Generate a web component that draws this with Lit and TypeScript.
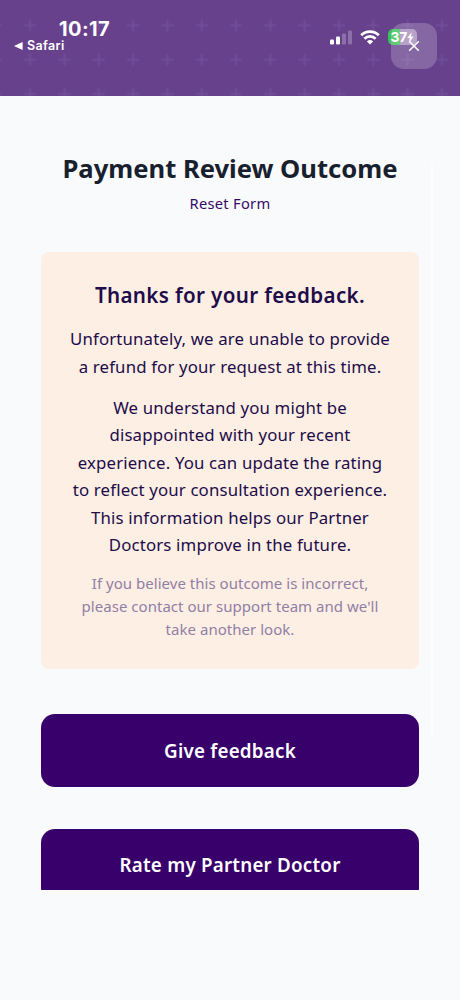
import { LitElement, html, css, svg } from "lit";
import { customElement } from "lit/decorators.js";

@customElement("status-header")
class StatusHeader extends LitElement {
  static styles = css`
    :host { display: block; position: relative; height: 96px; background: #67418c; color: #fff; overflow: hidden; font-family: Inter, "Liberation Sans", sans-serif; }
    .pattern { position: absolute; inset: 0; width: 100%; height: 100%; }
    .bar { position: relative; display: flex; justify-content: space-between; padding: 17px 43px 0 14px; }
    .left { display: flex; flex-direction: column; }
    .time { font-size: 20px; line-height: 24px; font-weight: 700; margin-left: 45px; letter-spacing: 0.4px; white-space: nowrap; }
    .back { display: flex; align-items: center; gap: 4px; font-size: 12.5px; line-height: 10px; font-weight: 600; letter-spacing: 0.35px; }
    .right { display: flex; align-items: center; height: 16px; margin-top: 12px; }
    .signal { width: 22px; height: 15px; margin-right: 8px; }
    .wifi { width: 20px; height: 15px; margin-right: 8px; }
    .battery { box-sizing: border-box; width: 29px; height: 16px; border-radius: 5px; padding-left: 2.5px; display: flex; align-items: center; background: linear-gradient(90deg, #3fbf5c 0 12px, #a48cba 12px); font-size: 13.8px; font-weight: 700; letter-spacing: -0.2px; }
    .bolt { width: 7px; height: 11px; }
    .close { position: absolute; left: 391px; top: 23px; width: 46px; height: 46px; border: 0; padding: 0; border-radius: 13px; background: rgba(255, 255, 255, 0.2); display: grid; place-items: center; }
    .close svg { width: 12px; height: 12px; }
  `;
  render() {
    return html`
      <svg class="pattern">
        <defs>
          <pattern id="plus" x="12.9" y="8.1" width="34.32" height="34.4" patternUnits="userSpaceOnUse">
            <path d="M11.2 17.2h12M17.2 11.2v12" stroke="#704c97" stroke-width="2" />
          </pattern>
        </defs>
        <rect width="100%" height="100%" fill="url(#plus)" />
      </svg>
      <div class="bar">
        <div class="left">
          <div class="time">10:17</div>
          <div class="back">
            <svg width="9" height="8" viewBox="0 0 9 8"><path d="M0 4 8.6 0v8z" fill="#fff" /></svg>
            Safari
          </div>
        </div>
        <div class="right">
          <svg class="signal" viewBox="0 0 22 15">
            ${[[0, 9.5, 1], [6, 6.5, 1], [12, 3.5, 0.25], [18, 0.5, 0.25]].map(
              ([x, y, o]) => svg`<rect x=${x} y=${y} width="4" height=${14.5 - y} rx="1.2" fill="#fff" fill-opacity=${o} />`
            )}
          </svg>
          <svg class="wifi" viewBox="0 0 20 15">
            <g fill="none" stroke="#fff" stroke-width="2.7">
              <path d="M1.2 5.3a12.6 12.6 0 0 1 17.6 0" />
              <path d="M4.4 8.7a8 8 0 0 1 11.2 0" />
            </g>
            <path d="M10 14.6 6.9 11.4a4.5 4.5 0 0 1 6.2 0z" fill="#fff" />
          </svg>
          <div class="battery">
            37<svg class="bolt" viewBox="0 0 7 11"><path d="M4.8 0 .2 6h2.6L1.8 11 6.8 4.6H4z" fill="#fff" /></svg>
          </div>
        </div>
      </div>
      <button class="close" aria-label="Close">
        <svg viewBox="0 0 12 12"><path d="m1.2 1.2 9.6 9.6m0-9.6L1.2 10.8" stroke="#fff" stroke-width="1.5" /></svg>
      </button>
    `;
  }
}

@customElement("app-root")
class AppRoot extends LitElement {
  static styles = css`
    :host { display: block; position: relative; height: 1000px; overflow: hidden; background: #f9fafc; font-family: "Noto Sans", "Open Sans", sans-serif; color: #210c4a; text-align: center; }
    .track { position: absolute; left: 431px; top: 164px; width: 2px; height: 572px; background: #fcfdfe; }
    main { box-sizing: border-box; height: 794px; overflow: hidden; padding: 54px 41px 0; display: flex; flex-direction: column; }
    h1, h2, p { margin: 0; white-space: nowrap; }
    h1 { font-size: 25.6px; line-height: 38px; font-weight: 700; color: #18202e; }
    .reset { font-size: 14.7px; line-height: 22px; margin-top: 4px; letter-spacing: 0.28px; color: #38096b; }
    .card { box-sizing: border-box; height: 417px; flex: none; margin-top: 38px; padding-top: 28px; border-radius: 8px; background: #feefe4; }
    h2 { font-size: 20.6px; line-height: 30px; font-weight: 600; letter-spacing: 0.35px; }
    .body { font-size: 16.8px; line-height: 27.5px; margin-top: 14px; letter-spacing: 0.16px; }
    .intro { margin-top: 15px; }
    .outcome { margin-top: 13.6px; }
    .note { font-size: 15px; line-height: 23px; margin-top: 13.4px; letter-spacing: 0.03px; color: #9080a5; }
    .action { flex: none; height: 73px; border: 0; border-radius: 14px; background: #37006a; color: #fff; font: 600 18.8px/73px "Noto Sans", sans-serif; letter-spacing: 0.22px; padding: 0; margin-top: 41.2px; }
    .first { margin-top: 45.4px; padding-top: 1px; }
  `;
  render() {
    return html`
      <status-header></status-header>
      <main>
        <h1>Payment Review Outcome</h1>
        <div class="reset">Reset Form</div>
        <section class="card">
          <h2>Thanks for your feedback.</h2>
          <p class="body intro">Unfortunately, we are unable to provide<br />a refund for your request at this time.</p>
          <p class="body outcome">
            We understand you might be<br />disappointed with your recent<br />experience. You can update the rating<br />to reflect your consultation experience.<br />This information helps our Partner<br />Doctors improve in the future.
          </p>
          <p class="note">If you believe this outcome is incorrect,<br />please contact our support team and we'll<br />take another look.</p>
        </section>
        <button class="action first">Give feedback</button>
        <button class="action">Rate my Partner Doctor</button>
      </main>
      <div class="track"></div>
    `;
  }
}
